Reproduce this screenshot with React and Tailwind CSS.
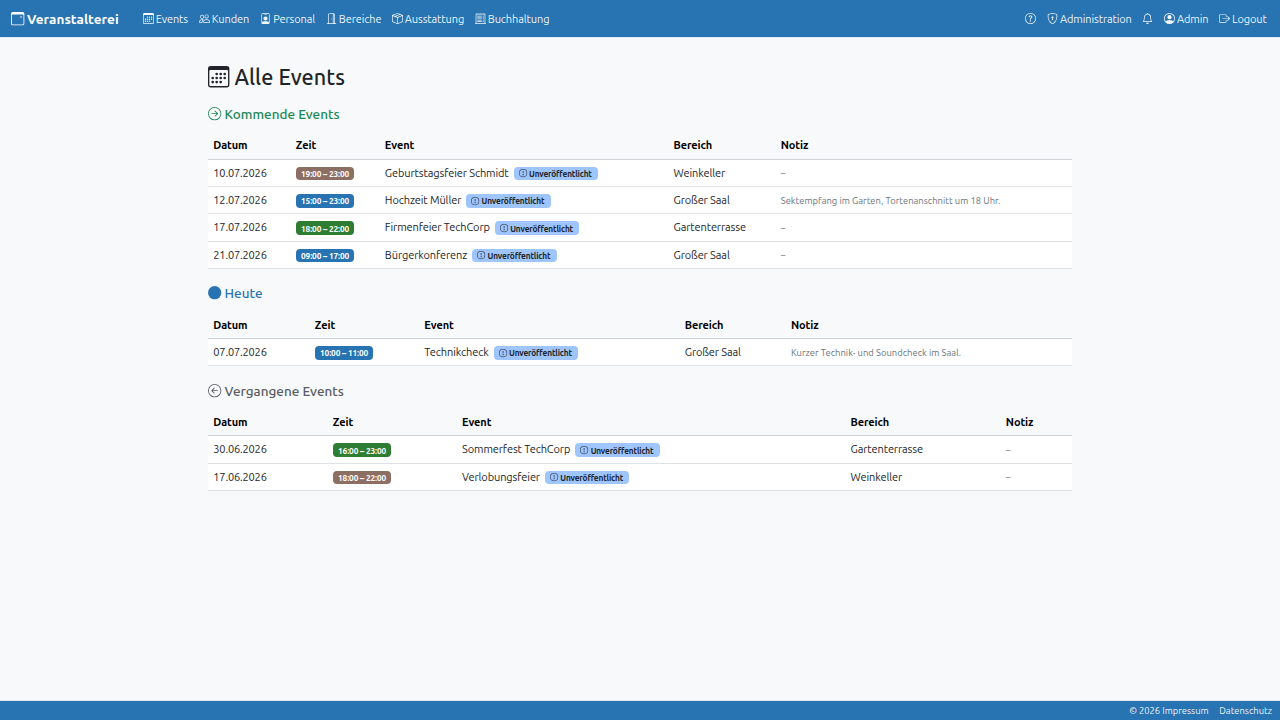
import React from "react";
import {
  BsArrowLeftCircle,
  BsArrowRightCircle,
  BsBell,
  BsBoxArrowRight,
  BsBoxSeam,
  BsCalendar3,
  BsCalendar3Event,
  BsCircleFill,
  BsDoorOpen,
  BsExclamationCircle,
  BsPeople,
  BsPersonBadge,
  BsPersonCircle,
  BsQuestionCircle,
  BsReceiptCutoff,
  BsShieldLock,
} from "react-icons/bs";

const areaColors = {
  Weinkeller: "bg-[#8d6e63]",
  "Großer Saal": "bg-[#2874b2]",
  Gartenterrasse: "bg-[#2e7d32]",
};

const upcoming = [
  { date: "10.07.2026", time: "19:00 – 23:00", name: "Geburtstagsfeier Schmidt", area: "Weinkeller" },
  {
    date: "12.07.2026",
    time: "15:00 – 23:00",
    name: "Hochzeit Müller",
    area: "Großer Saal",
    note: "Sektempfang im Garten, Tortenanschnitt um 18 Uhr.",
  },
  { date: "17.07.2026", time: "18:00 – 22:00", name: "Firmenfeier TechCorp", area: "Gartenterrasse" },
  { date: "21.07.2026", time: "09:00 – 17:00", name: "Bürgerkonferenz", area: "Großer Saal" },
];

const today = [
  {
    date: "07.07.2026",
    time: "10:00 – 11:00",
    name: "Technikcheck",
    area: "Großer Saal",
    note: "Kurzer Technik- und Soundcheck im Saal.",
  },
];

const past = [
  { date: "30.06.2026", time: "16:00 – 23:00", name: "Sommerfest TechCorp", area: "Gartenterrasse" },
  { date: "17.06.2026", time: "18:00 – 22:00", name: "Verlobungsfeier", area: "Weinkeller" },
];

const NavItem = ({ icon: Icon, label, className }) => (
  <a href="#" className={`flex items-center gap-[2.2px] whitespace-nowrap ${className}`}>
    <Icon className="h-[11px] w-[11px] shrink-0 overflow-visible" />
    {label && <span>{label}</span>}
  </a>
);

const Navbar = () => (
  <nav className="flex h-[38px] shrink-0 items-center border-b border-[#dce8f2] bg-[#2874b2] text-[11px] leading-4 tracking-[-0.1px] text-white/95">
    <a
      href="#"
      className="ml-[10.6px] flex w-[132px] items-center gap-[3px] text-[13.5px] font-bold tracking-[0.06px] text-white"
    >
      <BsCalendar3Event className="h-[13.33px] w-[13.33px] overflow-visible" />
      <span>Veranstalterei</span>
    </a>
    <NavItem icon={BsCalendar3} label="Events" className="w-[56px]" />
    <NavItem icon={BsPeople} label="Kunden" className="w-[61.5px]" />
    <NavItem icon={BsPersonBadge} label="Personal" className="w-[65.5px]" />
    <NavItem icon={BsDoorOpen} label="Bereiche" className="w-[66px]" />
    <NavItem icon={BsBoxSeam} label="Ausstattung" className="w-[83px]" />
    <NavItem icon={BsReceiptCutoff} label="Buchhaltung" className="w-[80px]" />
    <div className="ml-auto flex">
      <NavItem icon={BsQuestionCircle} className="w-[21.5px]" />
      <NavItem icon={BsShieldLock} label="Administration" className="w-[95.5px]" />
      <NavItem icon={BsBell} className="w-[21.5px]" />
      <NavItem icon={BsPersonCircle} label="Admin" className="w-[55px]" />
      <NavItem icon={BsBoxArrowRight} label="Logout" className="w-[61.3px]" />
    </div>
  </nav>
);

const UnpublishedBadge = () => (
  <span className="ml-[5px] mt-[1.5px] flex h-[13.6px] w-[84.5px] items-center gap-[2px] whitespace-nowrap rounded-[4px] bg-[#9ec5fe] pl-[5.2px] text-[8.3px] font-bold leading-[8px] tracking-[-0.16px] text-[#212529]">
    <BsExclamationCircle className="h-[8.2px] w-[8.2px] shrink-0 overflow-visible" />
    <span className="pt-px">Unveröffentlicht</span>
  </span>
);

const EventTable = ({ rows, columns }) => (
  <div className="mt-[10.67px] text-[11px] leading-4 tracking-[-0.1px] text-[#212529]">
    <div
      className={`grid h-[27.33px] items-center border-b border-[#ced2d5] pl-[5.33px] font-bold text-black ${columns}`}
    >
      <span>Datum</span>
      <span>Zeit</span>
      <span>Event</span>
      <span>Bereich</span>
      <span>Notiz</span>
    </div>
    {rows.map((row) => (
      <div
        key={row.date}
        className={`grid h-[27.33px] items-center whitespace-nowrap border-b border-[#dee2e6] bg-white pl-[5.33px] ${columns}`}
      >
        <span className="tracking-[-0.17px]">{row.date}</span>
        <span
          className={`mt-[1.5px] flex h-[13.6px] w-[58.5px] items-center justify-center rounded-[4px] pt-px text-[8.3px] font-bold leading-[8px] tracking-[-0.12px] text-white ${areaColors[row.area]}`}
        >
          {row.time}
        </span>
        <span className="flex items-center">
          {row.name}
          <UnpublishedBadge />
        </span>
        <span>{row.area}</span>
        <span className="pt-px text-[9.4px] tracking-[0.02px] text-[#6c757d]">{row.note || "–"}</span>
      </div>
    ))}
  </div>
);

const SectionTitle = ({ icon: Icon, label, className }) => (
  <h2 className={`mt-4 flex h-4 items-center gap-[3.2px] text-[13.5px] font-medium leading-4 ${className}`}>
    <Icon className="h-[13.33px] w-[13.33px] overflow-visible" />
    <span className="pt-px">{label}</span>
  </h2>
);

const App = () => (
  <div className="flex h-screen flex-col overflow-hidden bg-[#f8f9fb] font-['Ubuntu','Noto_Sans',sans-serif]">
    <Navbar />
    <main className="mx-auto w-[864px] grow pt-[26px]">
      <h1 className="flex h-[25.6px] items-center gap-[5px] text-[21.6px] font-medium leading-[25.6px] tracking-[0.04px] text-[#212529]">
        <BsCalendar3 className="h-[21.4px] w-[21.4px] overflow-visible" />
        <span className="pt-[2px]">Alle Events</span>
      </h1>

      <SectionTitle icon={BsArrowRightCircle} label="Kommende Events" className="text-[#198754]" />
      <EventTable rows={upcoming} columns="grid-cols-[82.5px_89px_288.7px_107.2px_1fr]" />

      <SectionTitle icon={BsCircleFill} label="Heute" className="text-[#2874b2]" />
      <EventTable rows={today} columns="grid-cols-[101.5px_109.5px_260.4px_106.2px_1fr]" />

      <SectionTitle icon={BsArrowLeftCircle} label="Vergangene Events" className="text-[#595c5f]" />
      <EventTable rows={past} columns="grid-cols-[119.5px_129.2px_388.5px_155.3px_1fr]" />
    </main>
    <footer className="flex h-5 shrink-0 items-center justify-end gap-[10.67px] border-t border-[#dfe6ed] bg-[#2874b2] pr-2 text-[9.4px] leading-[14px] text-white/95">
      <a href="#">© 2026 Impressum</a>
      <a href="#">Datenschutz</a>
    </footer>
  </div>
);

export default App;
